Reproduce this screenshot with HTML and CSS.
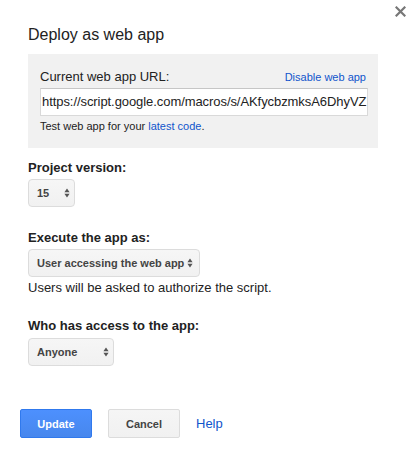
FILE: index.html
```html
<!DOCTYPE html>
<html>
<head>
<meta charset="utf-8">
<link rel="stylesheet" href="styles.css">
</head>
<body>
<div class="dialog">
  <button class="close" aria-label="Close">
    <svg width="11" height="11" viewBox="0 0 11 11"><path d="M1.5 1.5 L9.5 9.5 M9.5 1.5 L1.5 9.5" stroke="#777" stroke-width="2.2" stroke-linecap="square"/></svg>
  </button>
  <h1 class="title">Deploy as web app</h1>
  <div class="url-box">
    <div class="url-head">
      <span class="url-label">Current web app URL:</span>
      <a class="link small-link" href="#">Disable web app</a>
    </div>
    <div class="url-input">https://script.google.com/macros/s/AKfycbzmksA6DhyVZ</div>
    <div class="hint">Test web app for your <a class="link" href="#">latest code</a>.</div>
  </div>

  <div class="field field-version">
    <div class="label">Project version:</div>
    <div class="select sel-version"><span>15</span>
      <svg class="arrows" width="6" height="10" viewBox="0 0 6 10"><path d="M3 0.6 L5.6 4.2 L0.4 4.2 Z M3 9.4 L5.6 5.8 L0.4 5.8 Z" fill="#555"/></svg>
    </div>
  </div>

  <div class="field field-exec">
    <div class="label">Execute the app as:</div>
    <div class="select sel-exec"><span>User accessing the web app</span>
      <svg class="arrows" width="6" height="10" viewBox="0 0 6 10"><path d="M3 0.6 L5.6 4.2 L0.4 4.2 Z M3 9.4 L5.6 5.8 L0.4 5.8 Z" fill="#555"/></svg>
    </div>
    <div class="note">Users will be asked to authorize the script.</div>
  </div>

  <div class="field field-access">
    <div class="label">Who has access to the app:</div>
    <div class="select sel-access"><span>Anyone</span>
      <svg class="arrows" width="6" height="10" viewBox="0 0 6 10"><path d="M3 0.6 L5.6 4.2 L0.4 4.2 Z M3 9.4 L5.6 5.8 L0.4 5.8 Z" fill="#555"/></svg>
    </div>
  </div>

  <div class="buttons">
    <button class="btn btn-primary">Update</button>
    <button class="btn btn-default">Cancel</button>
    <a class="link help" href="#">Help</a>
  </div>
</div>
</body>
</html>
```

FILE: styles.css
```css
html, body {
  margin: 0;
  padding: 0;
  background: #fff;
}
body {
  font-family: "Liberation Sans", Arial, sans-serif;
  color: #222;
  width: 419px;
  height: 457px;
  overflow: hidden;
}
.dialog {
  position: relative;
  padding: 25px 41px 0 28px;
}
.close {
  position: absolute;
  top: 6px;
  right: 13px;
  border: 0;
  background: none;
  padding: 0;
  width: 11px;
  height: 11px;
  display: block;
}
.close svg { display: block; }
.title {
  margin: 0;
  font-size: 16px;
  line-height: 20px;
  font-weight: normal;
  color: #222;
}
.url-box {
  margin-top: 9px;
  background: #f1f1f1;
  width: 350px;
  box-sizing: border-box;
  padding: 15px 10px 15px 12px;
}
.url-head {
  display: flex;
  justify-content: space-between;
  align-items: baseline;
}
.url-label {
  font-size: 13px;
  line-height: 16px;
  color: #222;
}
.link {
  color: #15c;
  text-decoration: none;
}
.small-link {
  font-size: 11px;
  line-height: 14px;
  padding-right: 2px;
}
.url-input {
  margin-top: 3px;
  height: 28px;
  box-sizing: border-box;
  background: #fff;
  border: 1px solid #d9d9d9;
  border-top-color: #c6c6c6;
  padding: 0 0 0 1px;
  font-size: 13px;
  line-height: 26px;
  letter-spacing: -0.07px;
  white-space: nowrap;
  overflow: hidden;
  color: #222;
}
.hint {
  margin-top: 4px;
  font-size: 11px;
  line-height: 13px;
  color: #222;
}
.field-version { margin-top: 12px; }
.field-exec { margin-top: 23px; }
.field-access { margin-top: 23px; }
.label {
  font-size: 13px;
  line-height: 16px;
  font-weight: bold;
  color: #222;
}
.select {
  margin-top: 3px;
  height: 28px;
  box-sizing: border-box;
  border: 1px solid #dcdcdc;
  border-radius: 4px;
  background: linear-gradient(#f6f6f6, #f1f1f1);
  display: flex;
  align-items: center;
  justify-content: space-between;
  padding: 0 4px 0 8px;
  font-size: 11px;
  font-weight: bold;
  color: #444;
}
.arrows { display: block; }
.sel-version { width: 47px; }
.sel-exec { width: 172px; padding-right: 6px; }
.sel-access { width: 86px; margin-top: 4px; }
.note {
  margin-top: 3px;
  font-size: 13px;
  line-height: 15px;
  color: #222;
}
.buttons {
  margin-top: 43px;
  margin-left: -8px;
  display: flex;
  align-items: center;
  gap: 16px;
}
.btn {
  height: 29px;
  width: 72px;
  box-sizing: border-box;
  border-radius: 2px;
  font-family: "Liberation Sans", Arial, sans-serif;
  font-size: 11px;
  font-weight: bold;
  padding: 0;
}
.btn-primary {
  background: linear-gradient(#4d90fe, #4787ed);
  border: 1px solid #3079ed;
  color: #fff;
}
.btn-default {
  background: linear-gradient(#f5f5f5, #f1f1f1);
  border: 1px solid #dcdcdc;
  color: #444;
}
.help {
  font-size: 13px;
  line-height: 16px;
}
```
